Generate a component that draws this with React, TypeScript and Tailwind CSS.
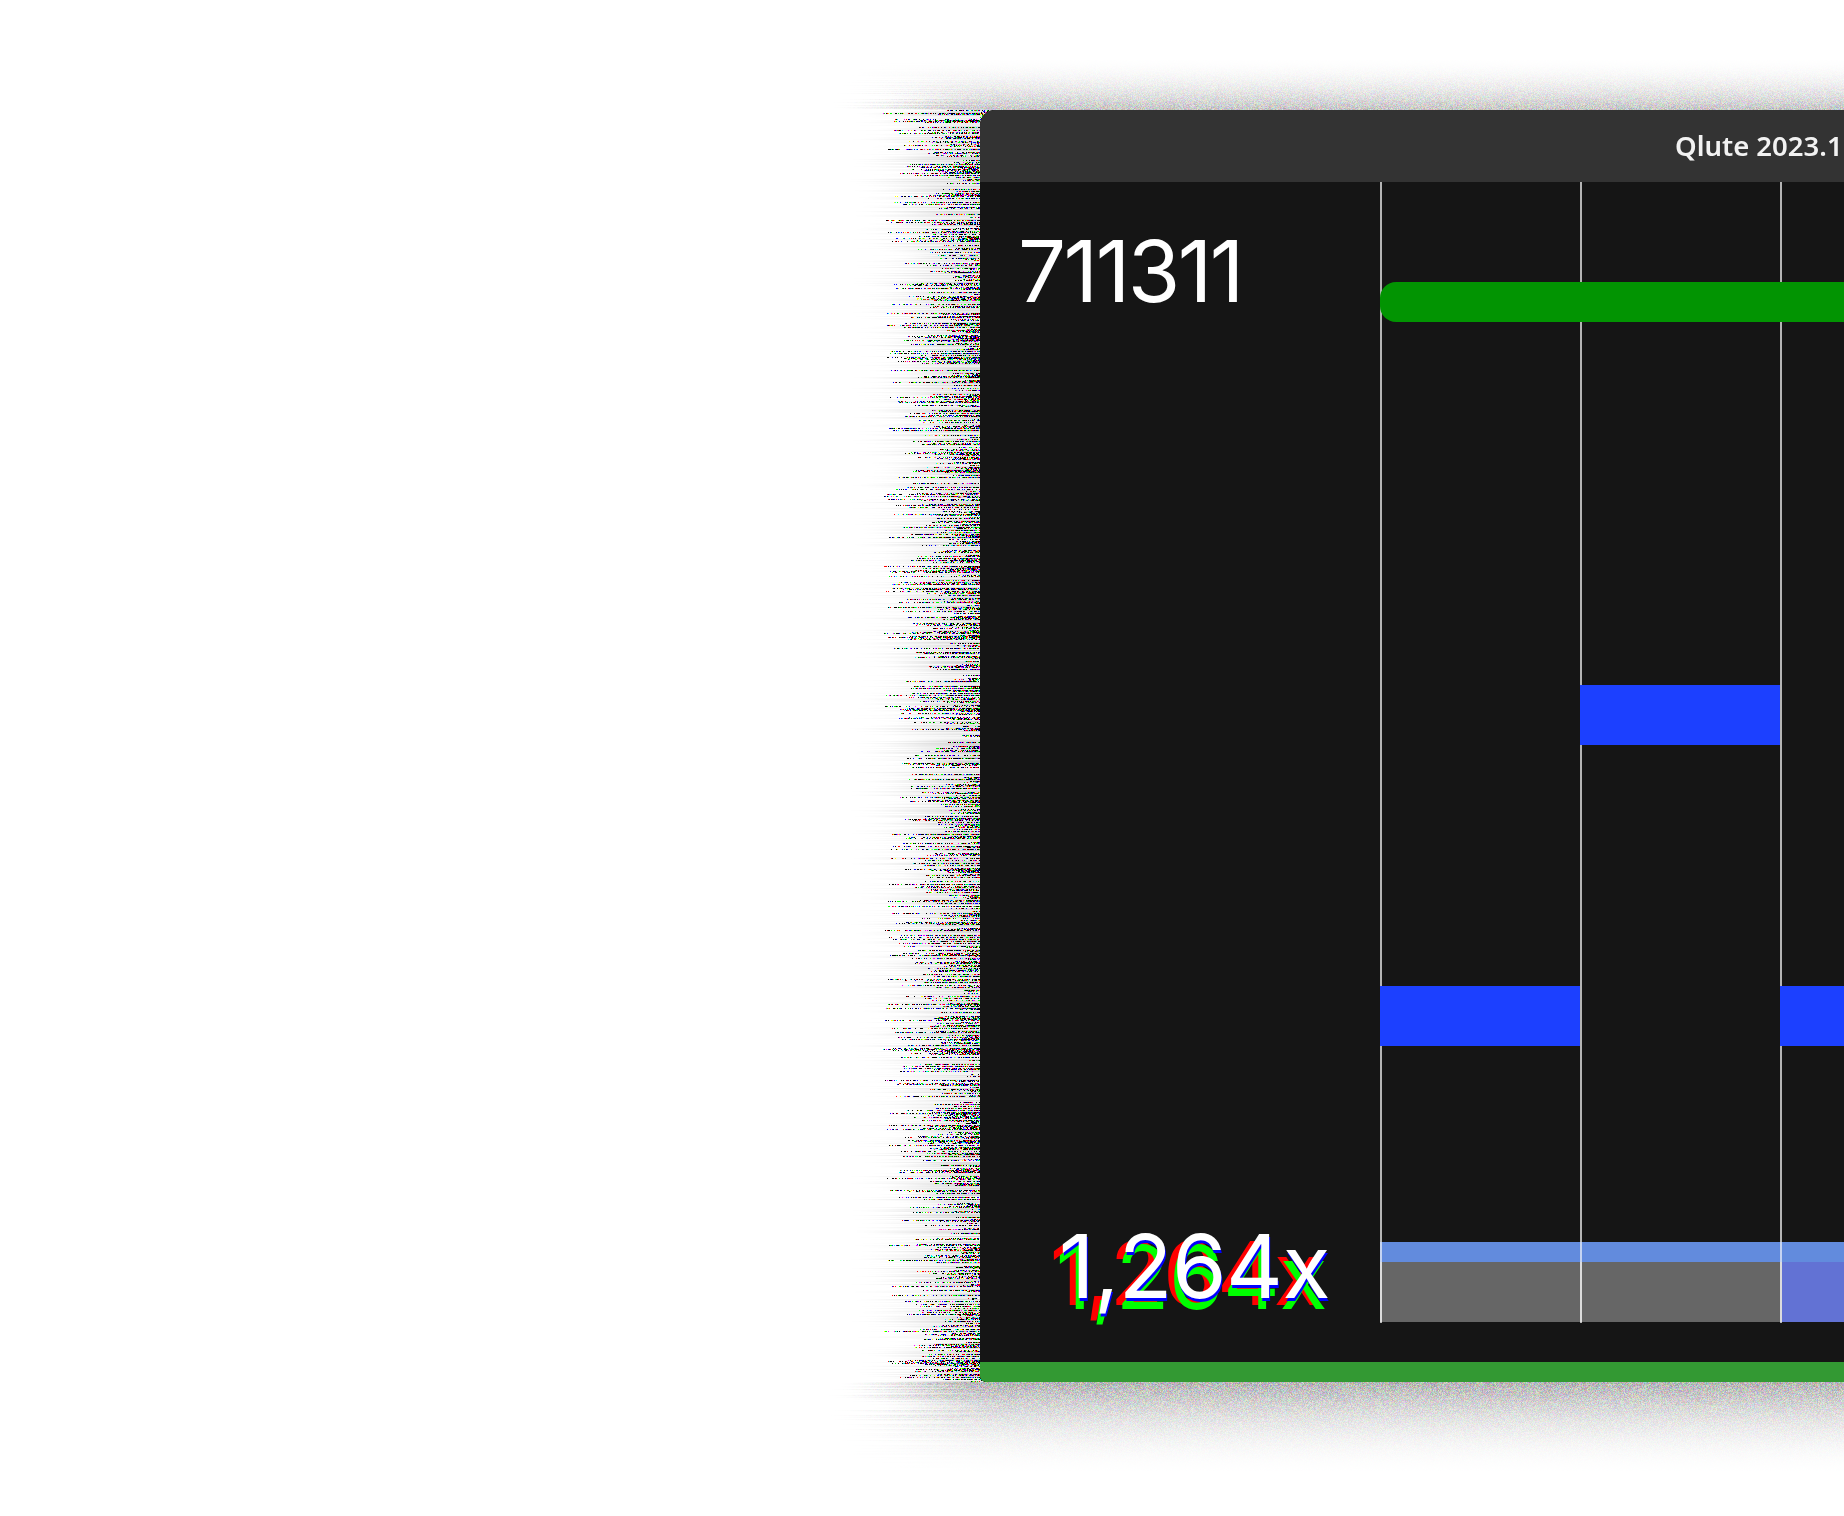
import { useEffect, useRef } from "react";

function Noise() {
  const ref = useRef<HTMLCanvasElement>(null);
  useEffect(() => {
    const c = ref.current;
    if (!c) return;
    const ctx = c.getContext("2d");
    if (!ctx) return;
    const W = 1844;
    const H = 1516;
    const img = ctx.createImageData(W, H);
    const d = img.data;
    let s = 12345;
    const rnd = () => {
      s = (s * 1664525 + 1013904223) >>> 0;
      return s / 4294967296;
    };
    const set = (x: number, y: number, r: number, g: number, b: number) => {
      const i = (y * W + x) * 4;
      d[i] = r;
      d[i + 1] = g;
      d[i + 2] = b;
      d[i + 3] = 255;
    };
    const smooth = (t: number) => {
      const u = Math.max(0, Math.min(1, t));
      return u * u * (3 - 2 * u);
    };
    for (let y = 0; y < H; y++) {
      const inBand = y >= 110 && y < 1382;
      const strong = inBand && rnd() < 0.55;
      const start = 882 + Math.pow(rnd(), 0.9) * 90;
      const density = 0.65 + rnd() * 0.35;
      const faint = rnd();
      const fadeStart = 840 + rnd() * 60;
      for (let x = 0; x < W; x++) {
        const inCorner =
          (y >= 110 && y < 126 && x >= 980 && x < 996) || (y >= 1374 && y < 1382 && x >= 980 && x < 988);
        if (inCorner) {
          if (rnd() < 0.45) {
            const pick = () => (rnd() < 0.2 ? 255 : 0);
            set(x, y, pick(), pick(), pick());
          } else {
            set(x, y, 225, 225, 225);
          }
          continue;
        }
        let a = 0;
        if (y < 110) {
          const t = 1 - (110 - y) / 55;
          a = t > 0 ? 0.23 * t * t : 0;
        } else if (y >= 1382) {
          const t = 1 - (y - 1382) / 95;
          a = t > 0 ? 0.29 * t * t : 0;
        }
        if (!(inBand && x < 980) && a > 0) {
          const h = smooth((x - fadeStart + 20) / 150);
          a *= h;
          const spread = a * 280;
          const base = 255 * (1 - a);
          const n = () => Math.max(0, Math.min(255, base + (rnd() - 0.5) * spread));
          set(x, y, n(), n(), n());
          continue;
        }
        if (inBand && x < 980) {
          const g = smooth((x - fadeStart) / (980 - fadeStart));
          const v = 255 - 34 * g * (0.3 + faint);
          if (strong && x > start && rnd() < density * (0.6 + 0.4 * (x - start) / (980 - start))) {
            const pick = () => (rnd() < 0.28 ? 255 : 0);
            set(x, y, pick(), pick(), pick());
          } else if (x >= fadeStart) {
            set(x, y, v, v, v);
          } else {
            set(x, y, 255, 255, 255);
          }
        } else {
          set(x, y, 255, 255, 255);
        }
      }
    }
    ctx.putImageData(img, 0, 0);
  }, []);
  return <canvas ref={ref} width={1844} height={1516} className="absolute inset-0 block" />;
}

function Lane({ note, hit }: { note: "none" | "high" | "low"; hit: boolean }) {
  return (
    <div className="flex w-[200px] shrink-0 flex-col border-l-2 border-[#b4b4b4]">
      {note === "high" && <div className="mt-[503px] -ml-[2px] h-[60px] bg-[#1c40ff]" />}
      {note === "low" && <div className="mt-[804px] -ml-[2px] h-[60px] bg-[#1c40ff]" />}
      <div className="mt-auto -ml-[2px] h-[20px] border-l-2 border-[#c5d4f2] bg-[#628bdd]" />
      <div
        className={
          hit
            ? "mb-[1px] -ml-[2px] h-[60px] border-l-2 border-[#dcdcdc] bg-[#6272d4]"
            : "mb-[1px] -ml-[2px] h-[60px] border-l-2 border-[#dcdcdc] bg-[#666666]"
        }
      />
    </div>
  );
}

export default function App() {
  return (
    <div className="relative h-[1516px] w-[1844px] overflow-hidden bg-white pt-[110px] pl-[980px] font-['Noto_Sans',sans-serif]">
      <Noise />
      <div className="relative flex h-[1272px] w-[864px] flex-col overflow-hidden rounded-tl-[15px] rounded-bl-[6px] bg-[#151515]">
        <div className="flex h-[72px] shrink-0 items-center bg-[#333333] pl-[695px] text-[27.5px] font-semibold whitespace-nowrap text-[#f2f2f2]">
          Qlute 2023.1
        </div>
        <div className="flex min-h-0 flex-1">
          <div className="flex w-[400px] shrink-0 flex-col justify-between pt-[40px] pb-[46px] font-['Inter',sans-serif] leading-[100px] font-normal text-white">
            <div className="pl-[38px] text-[85px] tracking-[-2.5px]">711311</div>
            <div className="pr-[50px] text-right text-[88px] tracking-[-0.5px] [text-shadow:1px_3px_0_#0000ff,-3px_11px_0_#00ff00,-9px_7px_0_#ff0000]">
              1,264x
            </div>
          </div>
          <div className="relative flex h-[1141px] flex-1">
            <Lane note="low" hit={false} />
            <Lane note="high" hit={false} />
            <Lane note="low" hit={true} />
            <div className="absolute top-[100px] left-0 h-[40px] w-[500px] rounded-l-[16px] bg-[#029402]" />
          </div>
        </div>
        <div className="h-[20px] shrink-0 bg-[#339933]" />
      </div>
    </div>
  );
}
